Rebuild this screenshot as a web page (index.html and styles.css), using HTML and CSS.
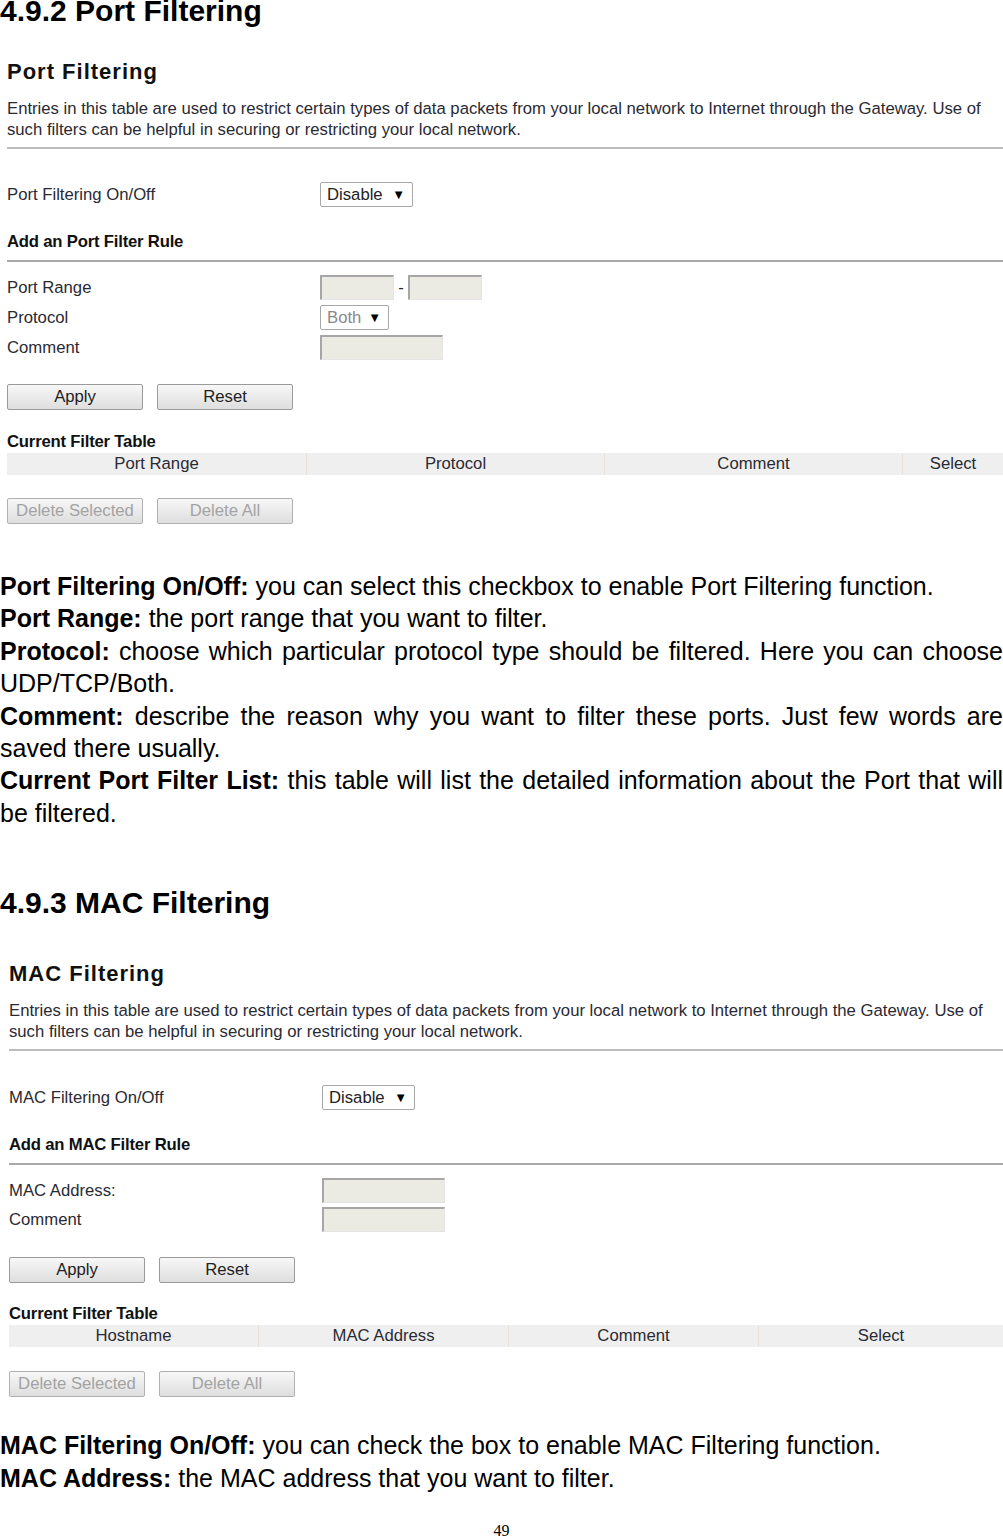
FILE: index.html
```html
<!DOCTYPE html>
<html lang="en">

<head>
    <meta charset="UTF-8">
    <title>Port and MAC Filtering</title>
    <link rel="stylesheet" href="styles.css">
</head>

<body>
    <h2 class="doc-heading first">4.9.2 Port Filtering</h2>

    <div class="panel port-panel">
        <div class="panel-title">Port Filtering</div>
        <p class="panel-desc">Entries in this table are used to restrict certain types of data packets from your local network to Internet through the Gateway. Use of such filters can be helpful in securing or restricting your local network.</p>
        <div class="rule"></div>

        <div class="row onoff">
            <span class="label">Port Filtering On/Off</span>
            <span class="select wide">Disable <i>&#9660;</i></span>
        </div>

        <div class="sub-title">Add an Port Filter Rule</div>
        <div class="rule thin"></div>

        <div class="rows">
            <div class="row">
                <span class="label">Port Range</span>
                <span class="field short"></span>
                <span class="dash">-</span>
                <span class="field short"></span>
            </div>
            <div class="row">
                <span class="label">Protocol</span>
                <span class="select narrow muted">Both <i>&#9660;</i></span>
            </div>
            <div class="row">
                <span class="label">Comment</span>
                <span class="field"></span>
            </div>
        </div>

        <div class="buttons apply-row">
            <button>Apply</button>
            <button>Reset</button>
        </div>

        <div class="table-title">Current Filter Table</div>
        <div class="table-head port-cols">
            <span>Port Range</span>
            <span>Protocol</span>
            <span>Comment</span>
            <span>Select</span>
        </div>

        <div class="buttons delete-row">
            <button disabled>Delete Selected</button>
            <button disabled>Delete All</button>
        </div>
    </div>

    <div class="doc-text port-text">
        <p><b>Port Filtering On/Off:</b> you can select this checkbox to enable Port Filtering function.</p>
        <p><b>Port Range:</b> the port range that you want to filter.</p>
        <p><b>Protocol:</b> choose which particular protocol type should be filtered. Here you can choose UDP/TCP/Both.</p>
        <p><b>Comment:</b> describe the reason why you want to filter these ports. Just few words are saved there usually.</p>
        <p><b>Current Port Filter List:</b> this table will list the detailed information about the Port that will be filtered.</p>
    </div>

    <h2 class="doc-heading second">4.9.3 MAC Filtering</h2>

    <div class="panel mac-panel">
        <div class="panel-title">MAC Filtering</div>
        <p class="panel-desc">Entries in this table are used to restrict certain types of data packets from your local network to Internet through the Gateway. Use of such filters can be helpful in securing or restricting your local network.</p>
        <div class="rule"></div>

        <div class="row onoff">
            <span class="label">MAC Filtering On/Off</span>
            <span class="select wide">Disable <i>&#9660;</i></span>
        </div>

        <div class="sub-title">Add an MAC Filter Rule</div>
        <div class="rule thin"></div>

        <div class="rows tight">
            <div class="row">
                <span class="label">MAC Address:</span>
                <span class="field"></span>
            </div>
            <div class="row">
                <span class="label">Comment</span>
                <span class="field"></span>
            </div>
        </div>

        <div class="buttons apply-row">
            <button>Apply</button>
            <button>Reset</button>
        </div>

        <div class="table-title">Current Filter Table</div>
        <div class="table-head mac-cols">
            <span>Hostname</span>
            <span>MAC Address</span>
            <span>Comment</span>
            <span>Select</span>
        </div>

        <div class="buttons delete-row">
            <button disabled>Delete Selected</button>
            <button disabled>Delete All</button>
        </div>
    </div>

    <div class="doc-text mac-text">
        <p><b>MAC Filtering On/Off:</b> you can check the box to enable MAC Filtering function.</p>
        <p><b>MAC Address:</b> the MAC address that you want to filter.</p>
    </div>

    <div class="page-number">49</div>
</body>

</html>
```

FILE: styles.css
```css
html {
    overflow-x: hidden;
}

body {
    margin: 0;
    width: 1003px;
    font-family: "Liberation Sans", Arial, sans-serif;
    color: #000;
    background: #fff;
}

/* document headings and text */
.doc-heading {
    font-size: 30px;
    line-height: 34px;
    font-weight: bold;
    margin: 0;
}

.doc-heading.first {
    margin-top: -6px;
}

.doc-heading.second {
    margin-top: 57px;
}

.doc-text {
    font-size: 25px;
    line-height: 32.4px;
    text-align: justify;
}

.doc-text p {
    margin: 0;
}

.port-text {
    margin-top: 46px;
}

.mac-text {
    margin-top: 32px;
}

.page-number {
    font-family: "Liberation Serif", "Times New Roman", serif;
    font-size: 16px;
    line-height: 20px;
    text-align: center;
    margin-top: 27px;
}

/* router screenshot panel */
.panel {
    font-size: 16.7px;
    color: #2a2a33;
}

.port-panel {
    margin-left: 7px;
}

.mac-panel {
    margin-left: 9px;
}

.panel-title {
    font-size: 22px;
    line-height: 24px;
    font-weight: bold;
    letter-spacing: 1px;
    color: #111;
    margin-top: 32px;
}

.mac-panel .panel-title {
    margin-top: 42px;
}

.panel-desc {
    margin: 14px 0 0;
    line-height: 21px;
}

.rule {
    height: 2px;
    background: #bdbdbd;
    margin-top: 7px;
}

.rule.thin {
    background: #a9a9a9;
    margin-top: 8px;
}

.row {
    display: flex;
    align-items: center;
    height: 25px;
}

.label {
    width: 313px;
    flex: none;
}

.onoff {
    margin-top: 33px;
}

.mac-panel .onoff {
    margin-top: 34px;
}

.sub-title,
.table-title {
    font-weight: bold;
    line-height: 20px;
    color: #111;
    letter-spacing: -0.2px;
}

.sub-title {
    margin-top: 25px;
}

.rows {
    margin-top: 13px;
    display: flex;
    flex-direction: column;
    gap: 5px;
}

.rows.tight {
    gap: 4px;
}

.select {
    box-sizing: border-box;
    height: 25px;
    border: 1px solid #a8a8a8;
    border-radius: 2px;
    padding: 0 7px 0 6px;
    display: flex;
    align-items: center;
    justify-content: space-between;
    background: #fff;
    color: #222;
}

.select i {
    font-style: normal;
    font-size: 13px;
    color: #000;
}

.select.wide {
    width: 93px;
}

.select.narrow {
    width: 69px;
}

.select.muted {
    color: #8a8a8a;
}

.field {
    box-sizing: border-box;
    width: 123px;
    height: 25px;
    background: #ebebe4;
    border-style: solid;
    border-width: 2px 1px 1px 2px;
    border-color: #a6a6a6 #e4e4e4 #e4e4e4 #a6a6a6;
}

.field.short {
    width: 74px;
}

.dash {
    width: 14px;
    text-align: center;
}

.buttons {
    display: flex;
    gap: 14px;
}

.buttons button {
    box-sizing: border-box;
    width: 136px;
    height: 26px;
    font: inherit;
    color: #222;
    border: 1px solid #9a9a9a;
    border-radius: 2px;
    background: linear-gradient(#f7f7f7, #dedede);
    padding: 0;
}

.buttons button:disabled {
    color: #a3a3a3;
    border-color: #b0b0b0;
}

.apply-row {
    margin-top: 24px;
}

.mac-panel .apply-row {
    margin-top: 25px;
}

.table-title {
    margin-top: 22px;
}

.mac-panel .table-title {
    margin-top: 21px;
}

.table-head {
    display: grid;
    height: 22px;
    margin-top: 1px;
    background: #efefef;
    align-items: center;
    text-align: center;
}

.table-head span {
    line-height: 22px;
    border-right: 1px solid #e8e2d6;
}

.table-head span:last-child {
    border-right: none;
}

.port-cols {
    grid-template-columns: 300px 298px 298px 100px;
}

.mac-cols {
    grid-template-columns: 250px 250px 250px 244px;
}

.delete-row {
    margin-top: 23px;
}

.mac-panel .delete-row {
    margin-top: 24px;
}
```
